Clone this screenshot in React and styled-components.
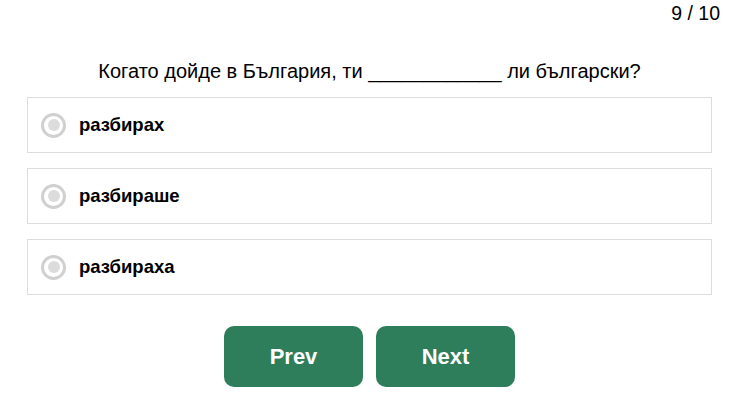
import styled, { createGlobalStyle } from "styled-components";

const GlobalStyle = createGlobalStyle`
  body {
    margin: 0;
    background: #fff;
    font-family: "Liberation Sans", Arial, sans-serif;
    color: #000;
  }
`;

const Root = styled.div`
  padding: 0 21px 0 27px;
`;

const Counter = styled.div`
  display: flex;
  justify-content: flex-end;
  padding: 2px 13px 0 0;
  margin-right: -21px;
  font-size: 19.5px;
  height: 23px;
`;

const Question = styled.p`
  margin: 35px 0 0;
  text-align: center;
  font-size: 20px;
  line-height: 23px;
`;

const OptionList = styled.div`
  margin-top: 14px;
  display: flex;
  flex-direction: column;
  gap: 15px;
`;

const Option = styled.label`
  height: 56px;
  box-sizing: border-box;
  border: 1px solid #ddd;
  display: flex;
  align-items: center;
  padding-left: 13px;
  gap: 13px;
  font-size: 18.5px;
  font-weight: bold;
  cursor: pointer;
`;

const Radio = styled.span`
  width: 25px;
  height: 25px;
  box-sizing: border-box;
  border: 3px solid #d0d0d0;
  border-radius: 50%;
  display: flex;
  align-items: center;
  justify-content: center;

  &::after {
    content: "";
    width: 12px;
    height: 12px;
    border-radius: 50%;
    background: ${(p) => (p.checked ? "#2e7d5b" : "#dcdcdc")};
  }
`;

const Buttons = styled.div`
  margin-top: 31px;
  display: flex;
  justify-content: center;
  gap: 13px;
`;

const NavButton = styled.button`
  width: 139px;
  height: 61px;
  border: none;
  border-radius: 10px;
  background: #2e7d5b;
  color: #fff;
  font-family: "Liberation Sans", Arial, sans-serif;
  font-size: 22px;
  font-weight: bold;
  cursor: pointer;
`;

const options = ["разбирах", "разбираше", "разбираха"];

export default function App() {
  return (
    <>
      <GlobalStyle />
      <Root>
        <Counter>9 / 10</Counter>
        <Question>Когато дойде в България, ти ____________ ли български?</Question>
        <OptionList>
          {options.map((o) => (
            <Option key={o}>
              <Radio />
              {o}
            </Option>
          ))}
        </OptionList>
        <Buttons>
          <NavButton>Prev</NavButton>
          <NavButton>Next</NavButton>
        </Buttons>
      </Root>
    </>
  );
}
